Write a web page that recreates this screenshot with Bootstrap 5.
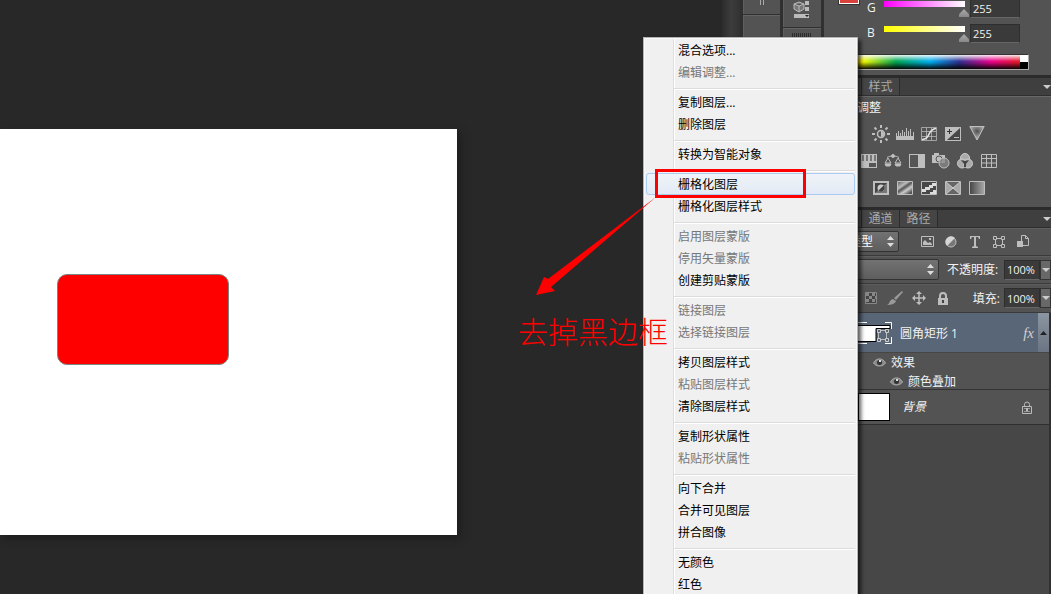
<!DOCTYPE html>
<html lang="zh-CN">
<head>
<meta charset="utf-8">
<meta name="viewport" content="width=device-width, initial-scale=1">
<title>图层菜单</title>
<link rel="stylesheet" href="https://cdn.jsdelivr.net/npm/bootstrap@5.3.0/dist/css/bootstrap.min.css">
<style>
body{background:#282828;color:#f2f2f2;font:12px/16px "Open Sans","Noto Sans CJK SC",sans-serif}
svg{display:block;flex:none}
.workspace{padding-top:129px;min-width:0}
.artboard{width:457px;height:406px;padding:145px 57px;background:#fff;box-shadow:3px 3px 8px #1c1c1c}
.shape-rect{width:172px;height:91px;background:red;border:1px solid #7a8585;border-radius:10px}
.view-scroll{width:18px;background:linear-gradient(90deg,#2c2c2c,#3c3c3c 50%,#333)}
.dock-strip{width:41px;background:#535353;border-left:3px solid #303030;box-shadow:inset 1px 0 #5e5e5e}
.dock-strip.first{width:40px}
.dock-cell{border-bottom:1px solid #303030}
.dock-cell + div{border-top:1px solid #636363}
.grip{width:20px;height:4px;background:repeating-linear-gradient(90deg,#2b2b2b 0 1px,transparent 1px 2px)}
.panels{width:230px;background:#474747;border-left:3px solid #303030}
.panel-face{background:#535353}
.color-face{height:75px}
.swatch-box{flex:none;width:20px;height:4px;margin-left:15px;background:#dc423c;border:solid #fff;border-width:0 1px 1px;box-shadow:0 0 0 1px #333}
.color-rows{gap:6px;margin-top:-1px;padding:0 31px 0 8px;min-width:0}
.color-row{height:19px}
.color-row label{width:12px;line-height:17px}
.color-row input[type=range]{flex:1;width:0;min-width:0;height:16px;margin:2px 1px 0 0;appearance:none;background:no-repeat center top/calc(100% - 9px) 6px}
.color-row input.ramp-g[type=range]{background-image:linear-gradient(90deg,#f0f,#fff)}
.color-row input.ramp-b[type=range]{background-image:linear-gradient(90deg,#ff0,#fff)}
.color-row input[type=range]::-webkit-slider-thumb{appearance:none;width:10px;height:8px;margin-top:8px;background:linear-gradient(#aaa,#888);clip-path:polygon(50% 0,100% 65%,100% 100%,0 100%,0 65%)}
.num-field{background:#3a3a3a;border:1px solid #2e2e2e;border-bottom-color:#666;color:#f2f2f2;font:11px/16px "Open Sans",sans-serif;padding:0 2px;border-radius:0;min-width:0}
.color-row .num-field{width:50px}
.spectrum{height:16px;margin:11px 22px 0 15px;border:1px solid #aaa;border-top-color:#333}
.spectrum-hues{background:linear-gradient(rgba(255,255,255,.9),rgba(255,255,255,0) 45%,rgba(0,0,0,0) 50%,rgba(0,0,0,.95)),linear-gradient(90deg,#e22,#ff0 12%,#00a651 31%,#00aeef 50%,#2e3192 66%,#ec008c 84%,#e31c23)}
.spectrum-ends{width:8px;background:linear-gradient(#fff 50%,#000 50%)}
.tab-strip{height:21px;background:#3f3f3f;border-top:3px solid #2b2b2b;border-bottom:1px solid #2f2f2f}
.tab-strip button{flex:none;border:0;border-right:1px solid #2b2b2b;background:#454545;color:#aaa;padding:1px 0 0;line-height:16px;width:38px;white-space:nowrap}
.tab-strip .active{background:#535353;color:#eee}
.caret-down{width:0;border:4px solid transparent;border-top-color:#ccc;border-bottom:0}
.adjust-face{height:111px;box-shadow:inset 0 1px #686868;padding-top:3px}
.adjust-face p{margin:0 0 3px 9px;line-height:18px}
.icon-row{height:27px;padding-left:45px}
.icon-row.wide{padding-left:33px}
.icon-btn{display:flex;align-items:center;justify-content:center;width:24px;padding:0;border:0;background:none;color:#bebebe}
.tool-row{height:28px;border-bottom:1px solid #3a3a3a;box-shadow:inset 0 1px #5e5e5e}
.tool-row.last{height:29px}
.tool-row label{padding-top:1px}
.pick{position:relative;height:21px;border:1px solid #333;border-radius:2px;background:linear-gradient(#727272,#5e5e5e);flex:none}
.pick select{appearance:none;width:100%;height:19px;border:0;background:none;color:#fff;padding:0 4px;line-height:18px;font-size:12px}
.pick svg{position:absolute;right:4px;top:4px;pointer-events:none}
.pick-kind{width:72px;margin-left:3px}
.pick-blend{width:112px;margin-left:3px}
.pct{width:36px;height:20px}
.drop-btn{width:11px;height:20px;border:1px solid #333;background:#686868;padding:0;display:flex;align-items:center;justify-content:center}
.layer-list{border-right:2px solid #303030}
.layer-row{height:39px;background:#596678;padding-left:31px}
.list-scroll{width:11px;background:linear-gradient(#8c96a2,#6a7482);border:0;padding:0;color:#222;display:flex;align-items:center;justify-content:center}
.layer-name{padding:2px 0 0 7px}
.fx-mark{font:italic 15px/18px "Liberation Serif",serif;color:#d0d0d0}
.layer-effects{border-bottom:1px solid #343434;border-top:1px solid #464646;height:38px}
.layer-effects div{height:19px;gap:5px}
.effect-head{padding-left:49px}
.effect-item{padding-left:66px}
.base-row{height:35px;border-bottom:1px solid #303030}
.base-thumb{width:32px;height:28px;margin-left:34px;background:#fff;border:1px solid #000}
.ctx-menu{position:absolute;right:193px;top:37px;width:215px;z-index:5;color:#000;background:linear-gradient(90deg,transparent 29px,#dedede 29px 30px,#fff 30px 31px,transparent 31px) #f0f0f0;border:1px solid #b4b4b4;box-shadow:inset 0 0 0 1px #f8f8f8,3px 3px 4px rgba(0,0,0,.65);padding:1px 2px}
.ctx-menu button{display:block;width:100%;height:22px;border:1px solid transparent;border-radius:3px;background:none;color:#000;text-align:left;padding:2px 0 0 31px;line-height:18px}
.ctx-menu button:disabled{color:#777}
.ctx-menu button.hot{border-color:#aaccf2;background:linear-gradient(#f0f3f8,#e2eaf5)}
.ctx-menu hr{height:2px;margin:5px 0 1px 28px;border:0;opacity:1;background:linear-gradient(#dcdcdc 50%,#fff 50%)}
.note-box{position:absolute;left:11px;top:131px;width:151px;height:29px;border:3px solid red;pointer-events:none}
.note-arrow{position:absolute;left:-109px;top:158px;pointer-events:none}
.note-text{position:absolute;left:-126px;top:272px;font:300 30px/40px "Noto Sans CJK SC",sans-serif;color:red;white-space:nowrap;pointer-events:none}
</style>
</head>
<body class="vh-100 overflow-hidden">
<div class="d-flex h-100">
  <main class="workspace flex-grow-1">
    <div class="artboard"><div class="shape-rect"></div></div>
  </main>
  <aside class="d-flex position-relative flex-shrink-0">
    <div class="view-scroll"></div>
    <div class="dock-strip first">
      <div class="dock-cell d-flex justify-content-center" style="height:15px">
        <svg width="6" height="5" fill="#aaa"><path d="M1 0h1v5H1zM4 0h1v5H4z"/></svg>
      </div>
      <div></div>
    </div>
    <div class="dock-strip">
      <div class="dock-cell d-flex justify-content-center" style="height:28px">
        <svg width="18" height="19" viewBox="0 0 18 19" fill="none" stroke="#bbb"><path d="M1 4l5-2 5 2v5l-5 3-5-3zM1 4l5 2 5-2M6 6v6" fill="#777"/><path fill="#bbb" stroke="none" d="M12 1h4v4h-4zM12 7h4v4h-4zM1 14h15v4H1z"/><path fill="#222" stroke="none" d="M12 15h4l-2 2z"/></svg>
      </div>
      <div class="d-flex justify-content-center pt-1"><div class="grip"></div></div>
    </div>

    <section class="panels d-flex flex-column">
      <div class="panel-face color-face">
        <div class="d-flex">
          <div class="swatch-box"></div>
          <div class="color-rows d-flex flex-column flex-grow-1">
            <div class="color-row d-flex"><label for="g">G</label><input class="ramp-g" type="range" id="g" max="255" value="255"><input class="num-field" aria-label="G" value="255"></div>
            <div class="color-row d-flex"><label for="b">B</label><input class="ramp-b" type="range" id="b" max="255" value="255"><input class="num-field" aria-label="B" value="255"></div>
          </div>
        </div>
        <div class="spectrum d-flex"><div class="spectrum-hues flex-grow-1"></div><div class="spectrum-ends"></div></div>
      </div>

      <div class="tab-strip d-flex align-items-center">
        <button class="active" type="button">调整</button><button type="button">样式</button>
        <span class="caret-down ms-auto"></span>
      </div>
      <div class="panel-face adjust-face">
        <p>添加调整</p>
        <div class="icon-row d-flex">
          <button class="icon-btn" type="button" aria-label="亮度"><svg width="18" height="18" viewBox="0 0 18 18" fill="none" stroke="currentColor"><circle cx="9" cy="9" r="3.5" stroke-width="1.5"/><path d="M9 6v6a3 3 0 0 0 0-6" fill="currentColor" stroke="none"/><path stroke-width="2" d="M9 0v3M9 15v3M0 9h3M15 9h3M2.5 2.5l2 2M13.500 13.500l2 2M2.500 15.500l2-2M13.500 4.500l2-2"/></svg></button>
          <button class="icon-btn" type="button" aria-label="色阶"><svg width="18" height="14" viewBox="0 0 18 14" fill="currentColor"><path d="M0 9h18v4H0zM0 6h1v3H0zM2 4h1v5H2zM4 6h1v3H4zM6 3h1v6H6zM8 5h1v4H8zM10 1h1v8h-1zM12 4h1v5h-1zM14 2h1v7h-1zM17 5h1v4h-1z"/></svg></button>
          <button class="icon-btn" type="button" aria-label="曲线"><svg width="16" height="14" viewBox="0 0 16 14" fill="none" stroke="currentColor"><path d="M.5.5h15v13H.5zM5.500 1v12M10.500 1v12M1 4.500h14M1 9.500h14" opacity=".75"/><path d="M1 12.500C10 12.500 6 2 15 1.500" stroke="#e5e5e5" stroke-width="1.500"/></svg></button>
          <button class="icon-btn" type="button" aria-label="曝光度"><svg width="16" height="14" viewBox="0 0 16 14"><path fill="currentColor" d="M0 0h16v14H0z"/><path fill="#484848" d="M15 1L2 13h13z"/><path fill="#333" d="M2 4h5v1H2zM4 2h1v5H4z"/><path fill="currentColor" d="M9 10h5v1H9z"/></svg></button>
          <button class="icon-btn" type="button" aria-label="自然饱和度"><svg width="16" height="15" viewBox="0 0 16 15"><radialGradient id="vib" cx=".5" cy=".35" r=".5"><stop stop-color="#505050"/><stop offset="1" stop-color="#aaa"/></radialGradient><path d="M.8.5h14.400L8 14z" fill="url(#vib)" stroke="currentColor"/></svg></button>
        </div>
        <div class="icon-row wide d-flex">
          <button class="icon-btn" type="button" aria-label="色相"><svg width="16" height="14" viewBox="0 0 16 14"><path fill="currentColor" d="M0 0h16v14H0z"/><path fill="#777" d="M1 1h2v6H1zM5 1h2v6H5zM9 1h2v6H9zM13 1h2v6h-2z"/><path fill="#555" d="M8 9h7v4H8z"/></svg></button>
          <button class="icon-btn" type="button" aria-label="色彩平衡"><svg width="18" height="15" viewBox="0 0 18 15" fill="none" stroke="currentColor"><path d="M9 1v3M3 4.500c3-2 9-2 12 0M4 5L1 10h6zM14 5l-3 5h6z"/><circle cx="9" cy="3" r="1.500" fill="currentColor"/><path fill="currentColor" d="M1 11h6l-1 2H2zM11 11h6l-1 2h-4z"/></svg></button>
          <button class="icon-btn" type="button" aria-label="黑白"><svg width="16" height="14" viewBox="0 0 16 14"><path fill="currentColor" d="M0 0h16v14H0z"/><path fill="#555" d="M1 1h8v12H1z"/></svg></button>
          <button class="icon-btn" type="button" aria-label="照片滤镜"><svg width="18" height="16" viewBox="0 0 18 16"><path fill="currentColor" d="M0 2h2V0h5v2h6v8H0z"/><circle cx="7" cy="6" r="3" fill="none" stroke="#555"/><circle cx="12" cy="10" r="5" fill="#888" fill-opacity=".75" stroke="currentColor"/></svg></button>
          <button class="icon-btn" type="button" aria-label="通道混合器"><svg width="16" height="16" viewBox="0 0 16 16" fill="#aaa" stroke="#ccc"><circle cx="8" cy="5" r="4.500"/><circle cx="5" cy="10.500" r="4.500"/><circle cx="11" cy="10.500" r="4.500"/><path fill="#444" stroke="none" d="M4 7l4 1 4-1-3 4v3H7v-3z"/></svg></button>
          <button class="icon-btn" type="button" aria-label="颜色查找"><svg width="16" height="14" viewBox="0 0 16 14" fill="#555" stroke="currentColor"><path d="M.5.5h15v13H.5zM5.500 1v12M10.500 1v12M1 4.500h14M1 9h14"/></svg></button>
        </div>
        <div class="icon-row d-flex">
          <button class="icon-btn" type="button" aria-label="反相"><svg width="16" height="14" viewBox="0 0 16 14"><path fill="#777" stroke="currentColor" stroke-width="2" d="M1 1h14v12H1z"/><path fill="#444" d="M2 2h12L2 12z"/><circle cx="8" cy="7" r="3.500" fill="#ccc"/><path fill="#444" d="M5.500 9.500l5-5a3.500 3.500 0 0 1-5 5z"/></svg></button>
          <button class="icon-btn" type="button" aria-label="色调分离"><svg width="16" height="14" viewBox="0 0 16 14"><linearGradient id="pos" x1="0" y1="0" x2=".8" y2="1"><stop offset=".1" stop-color="#777"/><stop offset=".35" stop-color="#bbb"/><stop offset=".5" stop-color="#555"/><stop offset=".7" stop-color="#ccc"/><stop offset=".95" stop-color="#555"/></linearGradient><path fill="url(#pos)" stroke="currentColor" d="M.5.5h15v13H.5z"/></svg></button>
          <button class="icon-btn" type="button" aria-label="阈值"><svg width="16" height="14" viewBox="0 0 16 14"><path fill="#484848" stroke="currentColor" d="M.5.5h15v13H.5z"/><path fill="#ddd" d="M1 8h3V6h4V4h3V2h4v3h-3v2H9v2H5v2H1zM9 13v-2h3V9h3v4z"/></svg></button>
          <button class="icon-btn" type="button" aria-label="可选颜色"><svg width="16" height="14" viewBox="0 0 16 14"><path fill="#666" stroke="currentColor" d="M.5.5h15v13H.5z"/><path fill="#aaa" d="M1 1l7 6-7 6zM15 1L8 7l7 6z"/><path stroke="#ccc" d="M1 1l14 12M15 1L1 13"/></svg></button>
          <button class="icon-btn" type="button" aria-label="渐变映射"><svg width="16" height="14" viewBox="0 0 16 14"><linearGradient id="map"><stop stop-color="#444"/><stop offset="1" stop-color="#aaa"/></linearGradient><path fill="url(#map)" stroke="currentColor" d="M.5.5h15v13H.5z"/></svg></button>
        </div>
      </div>

      <div class="tab-strip d-flex align-items-center">
        <button class="active" type="button">图层</button><button type="button">通道</button><button type="button">路径</button>
        <span class="caret-down ms-auto"></span>
      </div>
      <div class="panel-face tool-row d-flex align-items-center">
        <div class="pick pick-kind"><select aria-label="滤镜类型" style="padding-left:21px"><option>类型</option></select><svg width="7" height="11" fill="#ddd"><path d="M0 4h7L3.500 0zM0 7h7l-3.500 4z"/></svg></div>
        <div class="d-flex ms-3">
          <button class="icon-btn" type="button" aria-label="像素"><svg width="13" height="11" viewBox="0 0 13 11"><path fill="none" stroke="currentColor" d="M.5.5h12v10H.5z"/><path fill="currentColor" d="M2 9V6l2-2 3 3 2-1 2 2v1zM8 2h2v2H8z"/></svg></button>
          <button class="icon-btn" type="button" aria-label="调整"><svg width="12" height="12" viewBox="0 0 12 12"><circle cx="6" cy="6" r="5" fill="#777" stroke="currentColor"/><path fill="#d5d5d5" d="M2 10A5.500 5.500 0 0 1 10 2z"/></svg></button>
          <button class="icon-btn" type="button" aria-label="文字"><svg width="12" height="12" viewBox="0 0 12 12"><path fill="currentColor" d="M1 0h10v3h-1L9 1H7v9l2 1v1H3v-1l2-1V1H3L2 3H1z"/></svg></button>
          <button class="icon-btn" type="button" aria-label="形状"><svg width="12" height="12" viewBox="0 0 12 12" fill="#535353" stroke="currentColor"><path d="M2.500 2.500h7v7h-7z"/><path d="M.5.5h3v3h-3zM8.500.5h3v3h-3zM.5 8.500h3v3h-3zM8.500 8.500h3v3h-3z"/></svg></button>
          <button class="icon-btn" type="button" aria-label="智能对象"><svg width="12" height="13" viewBox="0 0 12 13"><path fill="none" stroke="currentColor" d="M4.500.5h4l3 3v7h-7zM8.500.5v3h3"/><path fill="currentColor" d="M0 6h6v6H0z"/></svg></button>
        </div>
      </div>
      <div class="panel-face tool-row d-flex align-items-center">
        <div class="pick pick-blend"><select aria-label="混合模式"><option>正常</option></select><svg width="7" height="11" fill="#ddd"><path d="M0 4h7L3.500 0zM0 7h7l-3.500 4z"/></svg></div>
        <label class="ms-2 text-nowrap" for="op">不透明度:</label>
        <input id="op" class="num-field pct ms-auto flex-shrink-0" value="100%"><button class="drop-btn flex-shrink-0" type="button" aria-label="不透明度选项"><span class="caret-down"></span></button>
      </div>
      <div class="panel-face tool-row last d-flex align-items-center">
        <span class="ms-1">锁定:</span>
        <div class="d-flex ms-1">
          <button class="icon-btn" type="button" aria-label="锁定透明像素"><svg width="12" height="12" viewBox="0 0 12 12"><path fill="#444" stroke="#888" d="M.5.5h11v11H.5z"/><path fill="#888" d="M1 1h3v3H1zM7 1h3v3H7zM4 4h3v3H4zM10 4h1v3h-1zM1 7h3v3H1zM7 7h3v3H7z"/></svg></button>
          <button class="icon-btn" type="button" aria-label="锁定图像像素"><svg width="16" height="14" viewBox="0 0 16 14"><path fill="#999" d="M15 0l1 1-7 8-2-2zM6 8l3 2c-1 3-5 4-9 4 3-1 2-5 6-6z"/></svg></button>
          <button class="icon-btn" type="button" aria-label="锁定位置"><svg width="14" height="14" viewBox="0 0 14 14"><path stroke="currentColor" stroke-width="1.500" d="M7 2v10M2 7h10"/><path fill="currentColor" d="M7 0l3 3H4zM7 14l3-3H4zM0 7l3-3v6zM14 7l-3-3v6z"/></svg></button>
          <button class="icon-btn" type="button" aria-label="锁定全部"><svg width="10" height="13" viewBox="0 0 10 13"><path fill="none" stroke="currentColor" stroke-width="2" d="M2 6V4a3 3 0 0 1 6 0v2"/><path fill="currentColor" d="M0 6h10v7H0z"/><path fill="#444" d="M4 8h2v3H4z"/></svg></button>
        </div>
        <label class="ms-auto me-1 text-nowrap" for="fill">填充:</label>
        <input id="fill" class="num-field pct flex-shrink-0" value="100%"><button class="drop-btn flex-shrink-0" type="button" aria-label="填充选项"><span class="caret-down"></span></button>
      </div>

      <div class="layer-list">
        <div class="d-flex">
          <div class="layer-row d-flex align-items-center flex-grow-1">
            <svg width="38" height="24" viewBox="0 0 38 24" fill="none"><path fill="#fff" stroke="#000" d="M1 4.500h34v3H21v13H1z"/><path stroke="#bbb" d="M23.500 9.500h8v9h-8z"/><path fill="#596678" stroke="#ccc" d="M22.500 8.500h3v3h-3zM30.500 8.500h3v3h-3zM22.500 17.500h3v3h-3zM30.500 17.500h3v3h-3z"/><path stroke="#fff" d="M0 1.500h12M30 1.500h6.500V8M0 22.500h12M30 22.500h6.500V16"/></svg>
            <span class="layer-name">圆角矩形 1</span>
            <span class="fx-mark ms-auto me-1">fx</span>
          </div>
          <button class="list-scroll" type="button" aria-label="向上滚动"><svg width="7" height="4" fill="currentColor"><path d="M0 4h7L3.500 0z"/></svg></button>
        </div>
        <div class="panel-face layer-effects">
          <div class="d-flex align-items-center effect-head"><svg width="13" height="9" viewBox="0 0 13 9"><path fill="#888" stroke="#aaa" d="M.5 5C3-.5 10-.5 12.500 5 10 9 3 9 .5 5z"/><circle cx="6.500" cy="4.500" r="2.500" fill="#333"/><path fill="#ddd" d="M6 2h2v2H6z"/></svg>效果</div>
          <div class="d-flex align-items-center effect-item"><svg width="13" height="9" viewBox="0 0 13 9"><path fill="#888" stroke="#aaa" d="M.5 5C3-.5 10-.5 12.500 5 10 9 3 9 .5 5z"/><circle cx="6.500" cy="4.500" r="2.500" fill="#333"/><path fill="#ddd" d="M6 2h2v2H6z"/></svg>颜色叠加</div>
        </div>
        <div class="panel-face base-row d-flex align-items-center">
          <div class="base-thumb"></div>
          <em class="ms-2 ps-1">背景</em>
          <svg class="ms-auto me-3" width="12" height="13" viewBox="0 0 12 13"><path fill="none" stroke="#bbb" d="M3.500 5V3.500a2.500 2.500 0 0 1 5 0V5M1.500 5.500h9v7h-9z"/><path stroke="#999" d="M3 7.500h6M3 10.500h6"/><path fill="#bbb" d="M5 7h2v3H5z"/></svg>
        </div>
      </div>
      <div class="layer-list flex-grow-1"></div>
    </section>

    <nav class="ctx-menu" aria-label="图层菜单">
      <button type="button">混合选项...</button>
      <button type="button" disabled>编辑调整...</button>
      <hr>
      <button type="button">复制图层...</button>
      <button type="button">删除图层</button>
      <hr>
      <button type="button">转换为智能对象</button>
      <hr>
      <button type="button" class="hot">栅格化图层</button>
      <button type="button">栅格化图层样式</button>
      <hr>
      <button type="button" disabled>启用图层蒙版</button>
      <button type="button" disabled>停用矢量蒙版</button>
      <button type="button">创建剪贴蒙版</button>
      <hr>
      <button type="button" disabled>链接图层</button>
      <button type="button" disabled>选择链接图层</button>
      <hr>
      <button type="button">拷贝图层样式</button>
      <button type="button" disabled>粘贴图层样式</button>
      <button type="button">清除图层样式</button>
      <hr>
      <button type="button">复制形状属性</button>
      <button type="button" disabled>粘贴形状属性</button>
      <hr>
      <button type="button">向下合并</button>
      <button type="button">合并可见图层</button>
      <button type="button">拼合图像</button>
      <hr>
      <button type="button">无颜色</button>
      <button type="button">红色</button>
      <div class="note-box"></div>
      <svg class="note-arrow" width="124" height="102" viewBox="0 0 124 102"><path fill="red" d="M121 1L13 83l-4-2L1 99l19-4-4-4z"/></svg>
      <div class="note-text">去掉黑边框</div>
    </nav>
  </aside>
</div>
<script src="https://cdn.jsdelivr.net/npm/bootstrap@5.3.0/dist/js/bootstrap.bundle.min.js"></script>
</body>
</html>
